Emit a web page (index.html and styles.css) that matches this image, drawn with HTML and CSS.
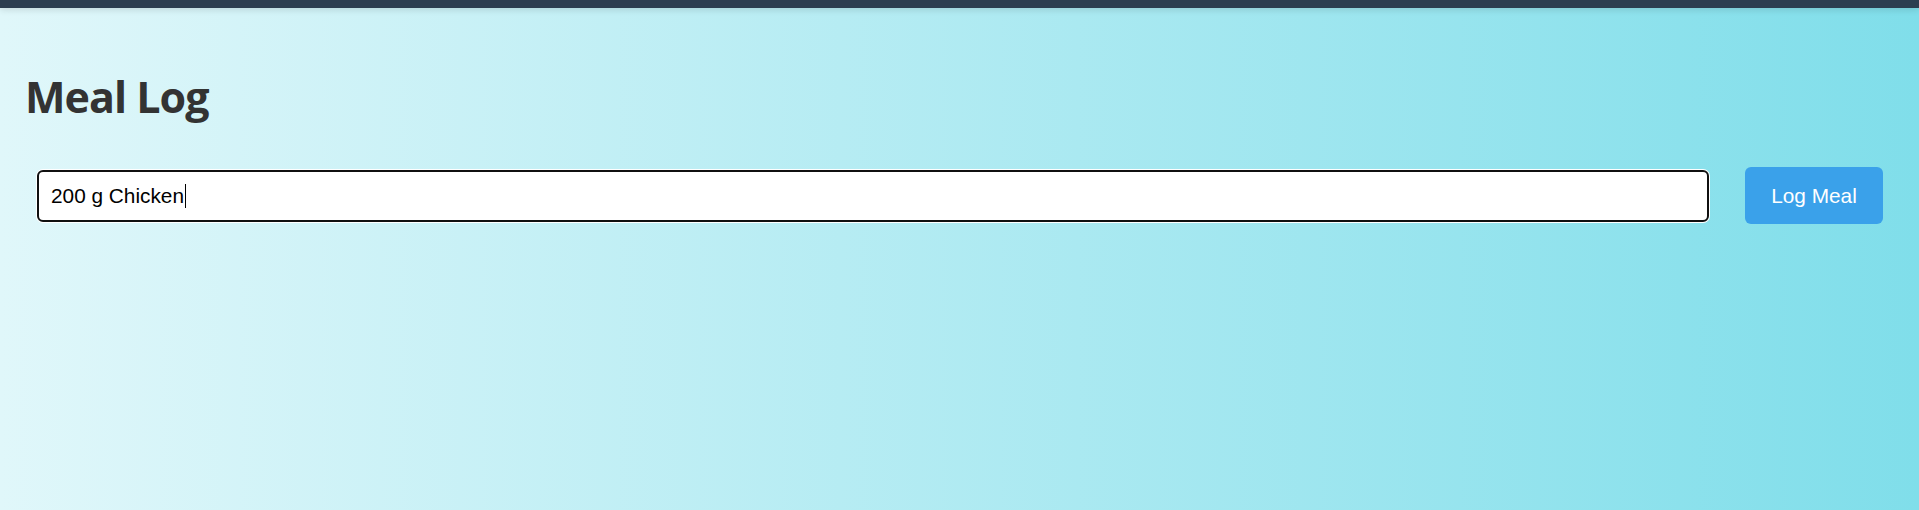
FILE: index.html
```html
<!DOCTYPE html>
<html lang="en">
<head>
<meta charset="utf-8">
<title>Meal Log</title>
<link rel="stylesheet" href="styles.css">
</head>
<body>
<header class="topbar"></header>
<main class="page">
  <h1 class="title">Meal Log</h1>
  <form class="meal-form">
    <div class="meal-input"><span class="meal-value">200 g Chicken</span><span class="caret"></span></div>
    <button type="button" class="log-btn">Log Meal</button>
  </form>
</main>
</body>
</html>
```
FILE: styles.css
```css
html, body {
  margin: 0;
  padding: 0;
  height: 100%;
}
body {
  background: linear-gradient(90deg, #e0f7fa 0%, #80deea 100%);
  font-family: "Liberation Sans", Arial, sans-serif;
  color: #333;
  overflow: hidden;
}
.topbar {
  height: 8px;
  background: #2c3e50;
  box-shadow: 0 2px 6px rgba(0, 0, 0, 0.12);
}
.page {
  padding: 0 25px;
}
.title {
  margin: 0;
  padding-top: 59px;
  font-family: "Open Sans", "Noto Sans", sans-serif;
  font-weight: 700;
  font-size: 43px;
  line-height: 60px;
  color: #333;
  letter-spacing: -1px;
}
.meal-form {
  display: flex;
  align-items: center;
  gap: 36px;
  margin: 40px 11px 0 12px;
}
.meal-input {
  flex: 1;
  box-sizing: border-box;
  height: 52px;
  display: flex;
  align-items: center;
  padding: 0 12px;
  background: #fff;
  border: 2px solid #101010;
  border-radius: 6px;
  box-shadow: 0 0 0 1px #fff;
  font-family: "Liberation Sans", Arial, sans-serif;
  font-size: 20.8px;
  color: #000;
}
.caret {
  display: inline-block;
  width: 1px;
  height: 24px;
  background: #000;
  margin-left: 1px;
}
.log-btn {
  box-sizing: border-box;
  width: 138px;
  height: 57px;
  border: none;
  border-radius: 6px;
  background: #3aa1ea;
  color: #fff;
  font-family: "Liberation Sans", Arial, sans-serif;
  font-size: 20.8px;
  padding: 0;
  cursor: pointer;
}
```
